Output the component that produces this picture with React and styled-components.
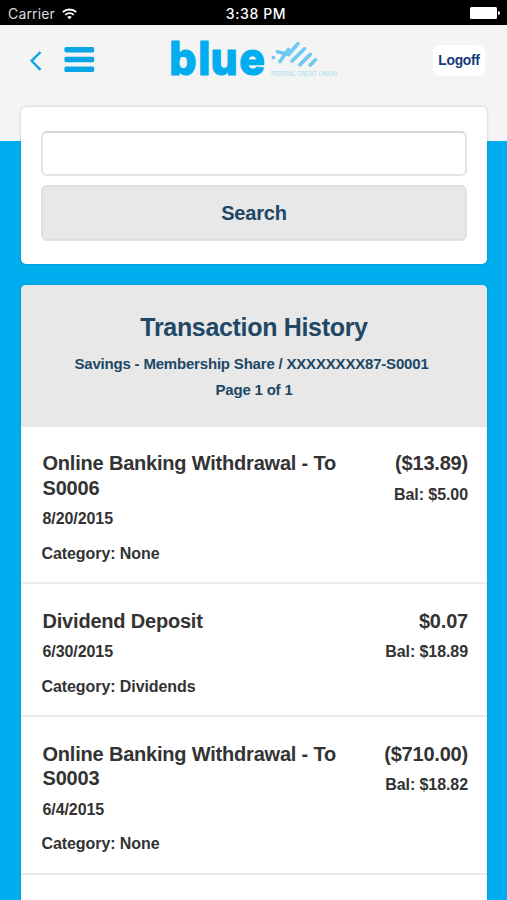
import React from "react";
import styled, { createGlobalStyle } from "styled-components";

const GlobalStyle = createGlobalStyle`
  * {
    box-sizing: border-box;
  }
  body {
    margin: 0;
    background: #00aeef;
    font-family: "Liberation Sans", Arial, sans-serif;
  }
`;

const Screen = styled.div`
  height: 900px;
  overflow: hidden;
  background: #00aeef;
`;

const StatusBar = styled.div`
  display: grid;
  grid-template-columns: 1fr auto 1fr;
  align-items: center;
  height: 25px;
  padding: 2px 7px 0 8px;
  background: #000;
  color: #dcdcdc;
  font-family: Inter, sans-serif;
  font-size: 14px;
  letter-spacing: 0.15px;
`;

const Carrier = styled.div`
  display: flex;
  align-items: center;
  gap: 7px;
`;

const Time = styled.div`
  padding-left: 4px;
  color: #fff;
  font-weight: 500;
  letter-spacing: 0.6px;
`;

const Battery = styled.svg`
  justify-self: end;
`;

const Header = styled.header`
  display: flex;
  align-items: flex-start;
  height: 116px;
  padding: 5px 22px 0 29px;
  background: #f4f4f4;
`;

const Nav = styled.div`
  display: flex;
  gap: 21px;
  padding-top: 16px;
  width: 141px;
`;

const Logoff = styled.button`
  margin: 15px 0 0 auto;
  width: 52px;
  height: 31px;
  padding: 0;
  border: 0;
  border-radius: 6px;
  background: #fff;
  color: #143a7b;
  font-family: inherit;
  font-size: 13.8px;
  font-weight: bold;
  letter-spacing: -0.25px;
`;

const Content = styled.main`
  margin: -35px 20px 0 21px;
`;

const Card = styled.section`
  border-radius: 5px;
  background: #fff;
  box-shadow: 0 0 2px 1px rgba(0, 0, 0, 0.1);
`;

const SearchCard = styled(Card)`
  height: 157px;
  margin-top: 1px;
  padding: 24px 20px 0;
`;

const SearchInput = styled.input`
  display: block;
  width: 100%;
  height: 45px;
  border: 2px solid #e4e4e4;
  border-top-color: #d8d8d8;
  border-radius: 6px;
  background: #fff;
`;

const SearchButton = styled.button`
  display: block;
  width: 100%;
  height: 56px;
  margin-top: 9px;
  border: 2px solid #e0e0e0;
  border-radius: 6px;
  background: #e8e8e8;
  color: #204765;
  font-family: inherit;
  font-size: 20px;
  font-weight: bold;
  letter-spacing: -0.2px;
`;

const HistoryCard = styled(Card)`
  height: 700px;
  margin-top: 21px;
  overflow: hidden;
`;

const HistoryHead = styled.div`
  height: 141.5px;
  padding-top: 27px;
  border-bottom: 1px solid #e2e2e2;
  background: #e8e8e8;
  color: #204765;
  font-weight: bold;
  text-align: center;
`;

const Title = styled.h1`
  margin: 0;
  font-size: 25px;
  line-height: 30px;
  letter-spacing: -0.32px;
`;

const SubTitle = styled.div`
  margin-top: 9px;
  padding-right: 5px;
  font-size: 15px;
  line-height: 26px;
  letter-spacing: -0.19px;
  & + & {
    margin-top: 0;
    padding-right: 0;
  }
`;

const Item = styled.div`
  display: flex;
  justify-content: space-between;
  padding: 24.5px 19px 16.5px 21.5px;
  border-bottom: 2px solid #ebebeb;
  color: #333;
  font-weight: bold;
`;

const Details = styled.div`
  width: 310px;
`;

const Name = styled.div`
  font-size: 20px;
  line-height: 24.5px;
  letter-spacing: -0.2px;
`;

const Small = styled.div`
  margin-top: ${(props) => props.$gap || "0"};
  font-size: 16px;
  line-height: 24px;
  letter-spacing: -0.08px;
`;

const Category = styled(Small)`
  margin-left: -1px;
`;

const Amounts = styled.div`
  text-align: right;
`;

const transactions = [
  {
    name: "Online Banking Withdrawal - To S0006",
    date: "8/20/2015",
    category: "None",
    amount: "($13.89)",
    balance: "$5.00",
  },
  {
    name: "Dividend Deposit",
    date: "6/30/2015",
    category: "Dividends",
    amount: "$0.07",
    balance: "$18.89",
  },
  {
    name: "Online Banking Withdrawal - To S0003",
    date: "6/4/2015",
    category: "None",
    amount: "($710.00)",
    balance: "$18.82",
  },
];

const WifiIcon = () => (
  <svg width="15" height="12" viewBox="0 0 15 12" fill="none" stroke="#fff" strokeWidth="1.8">
    <path d="M0.8 4.2a9.6 9.6 0 0 1 13.4 0" />
    <path d="M3.3 6.8a6 6 0 0 1 8.4 0" />
    <path d="M7.5 11.2L5.2 9a3.3 3.3 0 0 1 4.6 0z" fill="#fff" stroke="none" />
  </svg>
);

const BackIcon = () => (
  <svg width="14" height="30" viewBox="0 0 14 30" fill="none" stroke="#0ba5e6" strokeWidth="2.4">
    <path d="M11.5 6L2.6 14.8L11.5 23.8" />
  </svg>
);

const MenuIcon = () => (
  <svg width="31" height="30" viewBox="0 0 31 30" fill="#0ba5e6">
    <rect x="0.4" y="1" width="29.8" height="5.4" rx="1.6" />
    <rect x="0.4" y="10.8" width="29.8" height="5.4" rx="1.6" />
    <rect x="0.4" y="20.6" width="29.8" height="5.4" rx="1.6" />
  </svg>
);

const Logo = () => (
  <svg width="168" height="66" viewBox="0 -10 168 66">
    <text
      transform="scale(0.92 1)"
      x="-0.7 30.700 44 75.200"
      y="35.4"
      fill="#00aeef"
      stroke="#00aeef"
      strokeWidth="1.2"
      strokeLinejoin="round"
      fontFamily="Inter, sans-serif"
      fontWeight="800"
      fontSize="46.5"
    >
      blue
    </text>
    <g stroke="#6cc9ef" strokeWidth="3.6" strokeLinecap="round">
      <path d="M103.3 17.6h0.1" />
      <path d="M110 21.5L118.5 9.5" />
      <path d="M107.5 11.8L118.5 14.5" />
      <path d="M118.5 14.5L128 3.6" />
      <path d="M122 21L134.5 8.8" />
      <path d="M130 24.8L140.3 14.3" />
      <path d="M140.3 25L145.5 19.8" />
    </g>
    <text
      x="101"
      y="36"
      fill="#a4dbf2"
      fontFamily="Inter, sans-serif"
      fontSize="5.5"
      textLength="66"
      lengthAdjust="spacingAndGlyphs"
    >
      FEDERAL CREDIT UNION
    </text>
  </svg>
);

const App = () => {
  return (
    <>
      <GlobalStyle />
      <Screen>
        <StatusBar>
          <Carrier>
            Carrier
            <WifiIcon />
          </Carrier>
          <Time>3:38 PM</Time>
          <Battery width="30" height="13" viewBox="0 0 30 13" fill="#fff">
            <rect x="0" y="0" width="27" height="12" rx="1.5" />
            <path d="M28 4a2 2 0 0 1 0 4z" />
          </Battery>
        </StatusBar>

        <Header>
          <Nav>
            <BackIcon />
            <MenuIcon />
          </Nav>
          <Logo />
          <Logoff>Logoff</Logoff>
        </Header>

        <Content>
          <SearchCard>
            <SearchInput />
            <SearchButton>Search</SearchButton>
          </SearchCard>

          <HistoryCard>
            <HistoryHead>
              <Title>Transaction History</Title>
              <SubTitle>Savings - Membership Share / XXXXXXXX87-S0001</SubTitle>
              <SubTitle>Page 1 of 1</SubTitle>
            </HistoryHead>

            {transactions.map((t) => (
              <Item key={t.name}>
                <Details>
                  <Name>{t.name}</Name>
                  <Small $gap="7px">{t.date}</Small>
                  <Category $gap="10.5px">Category: {t.category}</Category>
                </Details>
                <Amounts>
                  <Name>{t.amount}</Name>
                  <Small $gap="7px">Bal: {t.balance}</Small>
                </Amounts>
              </Item>
            ))}
          </HistoryCard>
        </Content>
      </Screen>
    </>
  );
};

export default App;
